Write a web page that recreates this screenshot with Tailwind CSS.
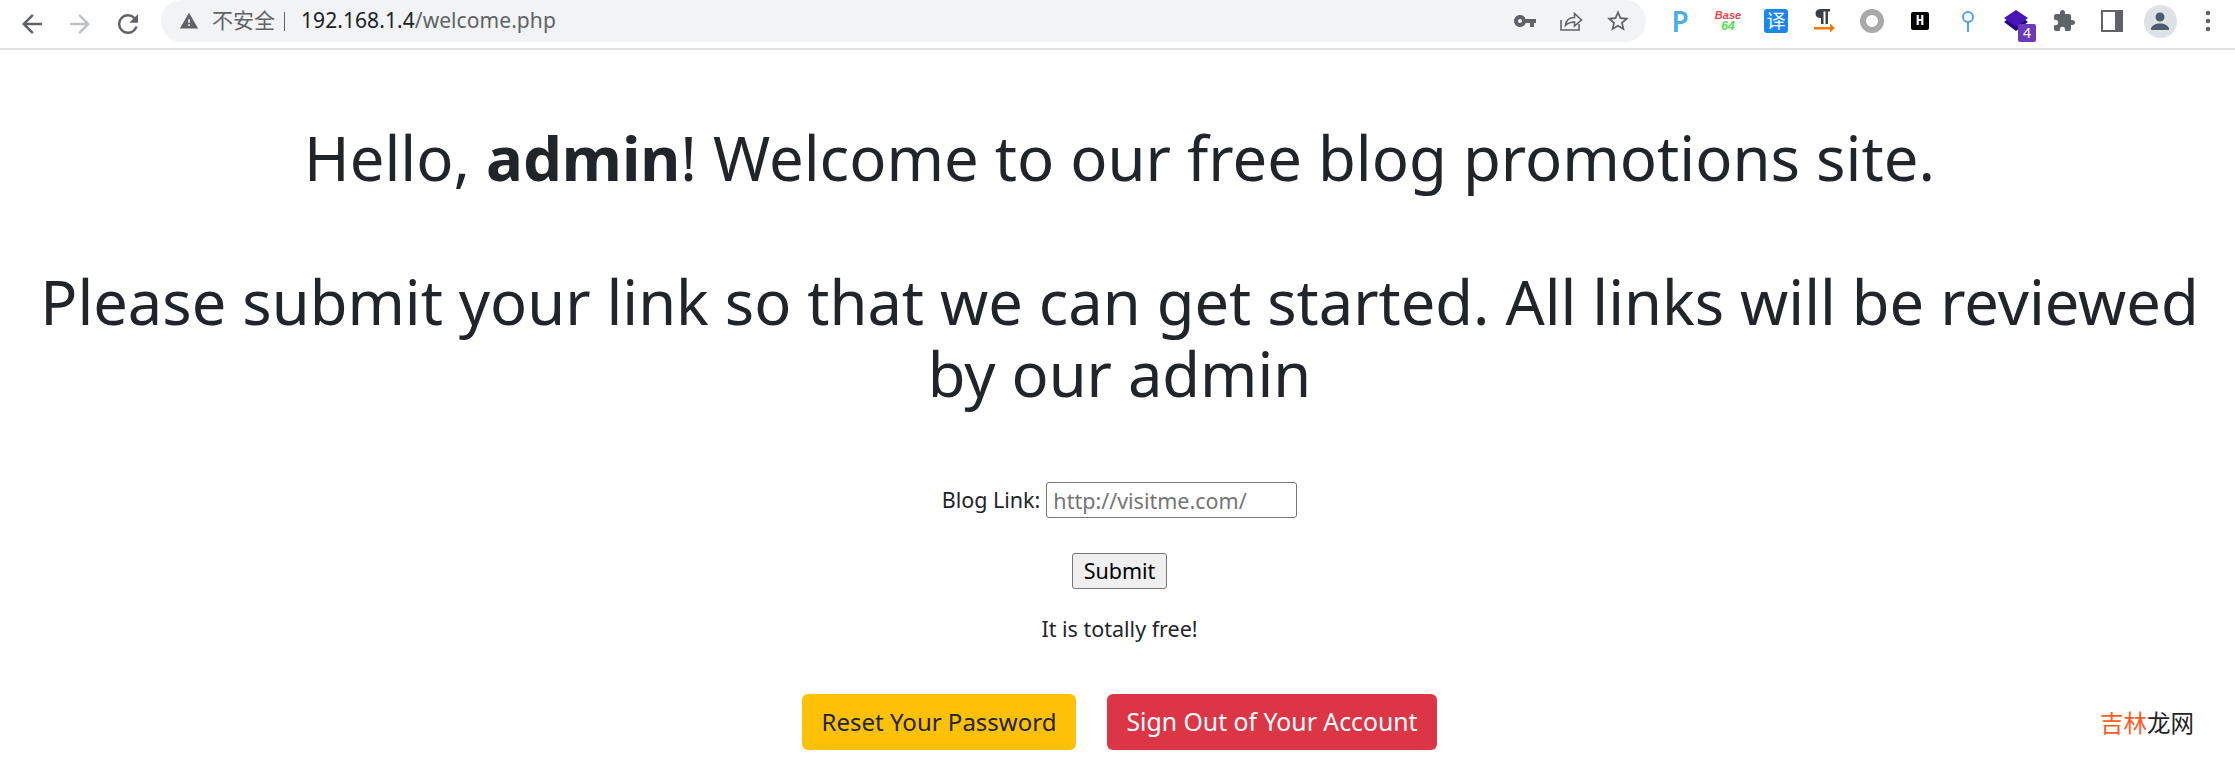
<!DOCTYPE html>
<html lang="en">

<head>
    <meta charset="UTF-8">
    <title>Welcome</title>
    <script src="https://cdn.jsdelivr.net/npm/@tailwindcss/browser@4"></script>
</head>

<body class="relative bg-white h-[759px] overflow-hidden font-['Noto_Sans','Noto_Sans_CJK_SC',sans-serif] text-[#212529]">
    <!-- Browser toolbar -->
    <div class="flex items-start h-[50px] pl-2 pr-[3px] border-b-2 border-[#dfe0e2]">
        <div class="flex items-center justify-center w-12 h-[48px]">
            <svg class="w-[30px] h-[30px]" viewBox="0 0 24 24" fill="#5f6368"><path d="M20 11H7.830l5.590-5.590L12 4l-8 8 8 8 1.410-1.410L7.830 13H20v-2z"/></svg>
        </div>
        <div class="flex items-center justify-center w-12 h-[48px]">
            <svg class="w-[30px] h-[30px]" viewBox="0 0 24 24" fill="#bdc1c6"><path d="M4 11h12.170l-5.590-5.590L12 4l8 8-8 8-1.410-1.410L16.170 13H4v-2z"/></svg>
        </div>
        <div class="flex items-center justify-center w-12 h-[48px]">
            <svg class="w-[30px] h-[30px]" viewBox="0 0 24 24" fill="#5f6368"><path d="M17.650 6.350A7.958 7.958 0 0 0 12 4c-4.420 0-7.990 3.580-7.990 8s3.570 8 7.990 8c3.730 0 6.840-2.550 7.730-6h-2.080A5.990 5.990 0 0 1 12 18c-3.310 0-6-2.690-6-6s2.690-6 6-6c1.660 0 3.140.69 4.220 1.780L13 11h7V4l-2.350 2.350z"/></svg>
        </div>

        <!-- Address bar -->
        <div class="flex items-center ml-[9px] mr-[10px] w-[1485px] h-[42px] pl-4 pr-[15px] rounded-r-[21px] rounded-l-[21px] bg-[#f1f3f4]">
            <svg class="w-[20px] h-[20px] ml-[2px]" viewBox="0 0 24 24" fill="#5f6368"><path d="M1 21h22L12 2 1 21zm12-3h-2v-2h2v2zm0-4h-2v-4h2v4z"/></svg>
            <span class="ml-[13px] text-[21px] text-[#5f6368]">不安全</span>
            <span class="ml-[9px] w-[1px] h-[19px] bg-[#5f6368]"></span>
            <span class="ml-[16px] text-[21px] tracking-[0.07px] text-[#202124] whitespace-nowrap">192.168.1.4<span class="text-[#5f6368]">/welcome.php</span></span>
            <div class="flex items-center ml-auto gap-[22px]">
                <svg class="w-6 h-6" viewBox="0 0 24 24" fill="#5f6368"><path d="M12.650 10A5.990 5.990 0 0 0 7 6c-3.310 0-6 2.690-6 6s2.690 6 6 6a5.990 5.990 0 0 0 5.650-4H17v4h4v-4h2v-4H12.650zM7 14c-1.100 0-2-.9-2-2s.9-2 2-2 2 .9 2 2-.9 2-2 2z"/></svg>
                <svg class="w-6 h-6" viewBox="0 0 24 24" fill="none" stroke="#5f6368" stroke-width="1.600"><path d="M20 15v6H2V11"/><path d="M6.500 16.500c.5-5 4-8 9-8V4.500l7 6.500-7 6v-4c-3.500 0-6.500 1-9 3.500z"/></svg>
                <svg class="w-[26px] h-[26px]" viewBox="0 0 24 24" fill="#5f6368"><path d="M22 9.240l-7.190-.62L12 2 9.190 8.630 2 9.240l5.460 4.730L5.820 21 12 17.270 18.180 21l-1.630-7.030L22 9.240zM12 15.400l-3.760 2.270 1-4.280-3.320-2.880 4.380-.38L12 6.100l1.710 4.040 4.380.38-3.320 2.880 1 4.280L12 15.400z"/></svg>
            </div>
        </div>

        <!-- Extensions -->
        <div class="flex items-center justify-center w-12 h-[42px] text-[28px] leading-none font-semibold text-[#4aaee0]">P</div>
        <div class="flex flex-col items-center justify-center w-12 h-[42px] font-['Liberation_Sans',sans-serif] italic font-bold">
            <span class="text-[11px] leading-[11px] text-[#f0444f]">Base</span>
            <span class="text-[12px] leading-[11px] text-[#4fe04f]">64</span>
        </div>
        <div class="flex items-center justify-center w-12 h-[42px]">
            <div class="flex items-center justify-center w-6 h-6 rounded-[3px] bg-[#1a86f0] text-white text-[19px] leading-none">译</div>
        </div>
        <div class="flex items-center justify-center w-12 h-[42px]">
            <svg class="w-6 h-6" viewBox="0 0 24 24"><path d="M9 0H18V2.500H16V15H13.500V2.500H11.500V15H9V9C5.500 9 3.500 7.500 3.500 4.500S5.500 0 9 0z" fill="#3c4043"/><path d="M2 18H18V14.500L23 19L18 23.500V20.500H2z" fill="#f57c00"/></svg>
        </div>
        <div class="flex items-center justify-center w-12 h-[42px]">
            <div class="w-6 h-6 rounded-full border-[6px] border-[#a9a9a9]"></div>
        </div>
        <div class="flex items-center justify-center w-12 h-[42px]">
            <div class="flex items-center justify-center w-[18px] h-[18px] rounded-[2px] bg-black text-white text-[14px] leading-none font-bold font-['Liberation_Mono',monospace]">H</div>
        </div>
        <div class="flex items-center justify-center w-12 h-[42px]">
            <svg class="w-6 h-6" viewBox="0 0 24 24" fill="none" stroke="#4da3f5" stroke-width="2"><circle cx="12" cy="8" r="5"/><path d="M12 13v10"/></svg>
        </div>
        <div class="relative flex items-center justify-center w-12 h-[42px]">
            <svg class="w-6 h-6" viewBox="0 0 24 24"><path d="M0 13l12 9 12-9-12-9z" fill="#1e0b7a"/><path d="M0 9l12-8 12 8-12 9z" fill="#4a12b8"/></svg>
            <div class="absolute left-[26px] top-[24px] flex items-center justify-center w-[18px] h-[18px] rounded-[2px] bg-[#6a3ab8] text-white text-[14px] leading-none">4</div>
        </div>
        <div class="flex items-center justify-center w-12 h-[42px]">
            <svg class="w-6 h-6" viewBox="0 0 24 24" fill="#5f6368"><path d="M20.500 11H19V7c0-1.100-.9-2-2-2h-4V3.500C13 2.120 11.880 1 10.500 1S8 2.120 8 3.500V5H4c-1.100 0-1.990.9-1.990 2v3.800H3.500c1.490 0 2.700 1.210 2.700 2.700s-1.210 2.700-2.700 2.700H2V20c0 1.100.9 2 2 2h3.800v-1.500c0-1.490 1.210-2.700 2.700-2.700 1.490 0 2.700 1.210 2.700 2.700V22H17c1.100 0 2-.9 2-2v-4h1.500c1.380 0 2.500-1.120 2.500-2.500S21.880 11 20.500 11z"/></svg>
        </div>
        <div class="flex items-center justify-center w-12 h-[42px]">
            <div class="flex justify-end w-[22px] h-[22px] border-[2px] border-[#5f6368] bg-white">
                <div class="w-[6px] h-full bg-[#5f6368]"></div>
            </div>
        </div>
        <div class="flex items-center justify-center w-12 h-[42px]">
            <div class="flex items-center justify-center w-[33px] h-[33px] rounded-full bg-[#dee1e6]">
                <svg class="w-6 h-6" viewBox="0 0 24 24" fill="#4f5b6e"><circle cx="12" cy="8" r="4.500"/><path d="M3 20c0-3.500 5-5.500 9-5.500s9 2 9 5.500v1H3z"/></svg>
            </div>
        </div>
        <div class="flex items-center justify-center w-12 h-[42px]">
            <svg class="w-6 h-6" viewBox="0 0 24 24" fill="#5f6368"><circle cx="12" cy="4" r="2.300"/><circle cx="12" cy="12" r="2.300"/><circle cx="12" cy="20" r="2.300"/></svg>
        </div>
    </div>

    <!-- Page content -->
    <div class="flex flex-col items-center text-center pl-[4px]">
        <h1 class="mt-[71px] text-[61.600px] leading-[72px] font-normal whitespace-nowrap">Hello, <b class="font-bold">admin</b>! Welcome to our free blog promotions site.</h1>
        <h1 class="mt-[72px] text-[61.400px] leading-[72px] font-normal whitespace-nowrap">Please submit your link so that we can get started. All links will be reviewed<br>by our admin</h1>

        <form class="flex flex-col items-center mt-[73px]">
            <div class="flex items-center h-9 text-[21.500px]">
                <label for="url">Blog Link:</label>
                <input id="url" type="text" placeholder="http://visitme.com/" class="ml-[6px] w-[251px] h-9 px-[6px] text-[21.500px] border border-[#767676] rounded-[3px] placeholder:text-[#757575]">
            </div>
            <button type="button" class="mt-[35px] w-[95px] h-9 text-[21.500px] text-black bg-[#efefef] border border-[#767676] rounded-[3px]">Submit</button>
        </form>
        <p class="mt-[25px] text-[21.500px] leading-[30px]">It is totally free!</p>

        <div class="flex gap-[31px] mt-[50px]">
            <a class="flex items-center justify-center w-[274px] h-[56px] rounded-[6px] bg-[#ffc107] text-[24px]">Reset Your Password</a>
            <a class="flex items-center justify-center w-[330px] h-[56px] rounded-[6px] bg-[#dc3545] text-[24.800px] text-white">Sign Out of Your Account</a>
        </div>
    </div>

    <!-- Watermark -->
    <div class="absolute left-[2100px] top-[710px] text-[23.500px] leading-[26px] text-[#222]"><span class="text-[#ff5a1f]">吉林</span>龙网</div>
</body>

</html>
